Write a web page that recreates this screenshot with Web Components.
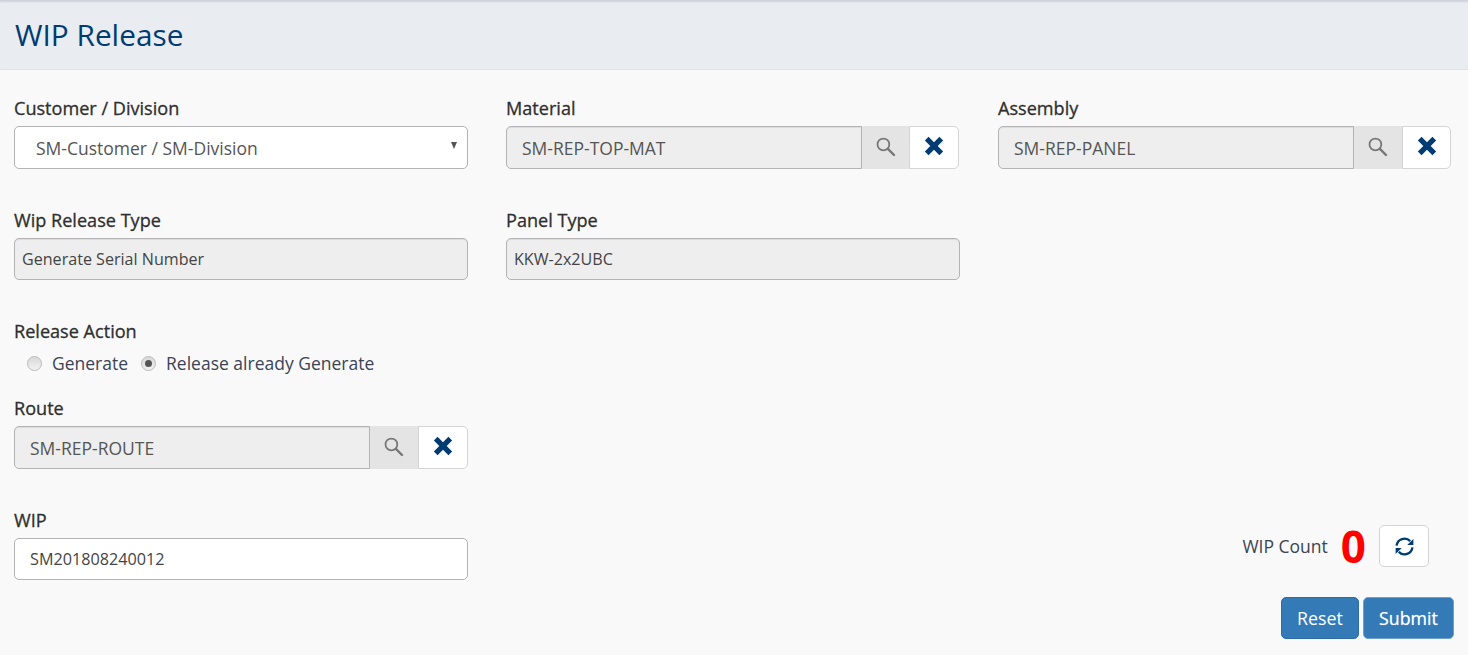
<!DOCTYPE html>
<html lang="en"><head><meta charset="utf-8"><title>WIP Release</title>
<style>
html,body{margin:0;padding:0;height:655px;overflow:hidden;background:#f9f9f9;font-family:"Open Sans",sans-serif;color:#333}
wip-form{display:block}
</style></head><body>
<wip-header>WIP Release</wip-header>
<wip-form>
  <form-row>
    <form-field label="Customer / Division"><select-box>SM-Customer / SM-Division</select-box></form-field>
    <form-field label="Material"><lookup-input style="--s:47px;margin-right:1px">SM-REP-TOP-MAT</lookup-input></form-field>
    <form-field label="Assembly"><lookup-input style="--x:49px">SM-REP-PANEL</lookup-input></form-field>
  </form-row>
  <form-row next>
    <form-field label="Wip Release Type"><text-box readonly>Generate Serial Number</text-box></form-field>
    <form-field label="Panel Type"><text-box readonly>KKW-2x2UBC</text-box></form-field>
  </form-row>
  <form-row next>
    <form-field label="Release Action"><radio-group><radio-option>Generate</radio-option><radio-option checked>Release already Generate</radio-option></radio-group></form-field>
  </form-row>
  <form-row route>
    <form-field label="Route"><lookup-input>SM-REP-ROUTE</lookup-input></form-field>
  </form-row>
  <form-row next>
    <form-field label="WIP"><text-box>SM201808240012</text-box></form-field>
    <span></span>
    <wip-count value="0"></wip-count>
  </form-row>
  <form-actions><action-button>Reset</action-button><action-button outlined>Submit</action-button></form-actions>
</wip-form>
<script>
const def=(name,css,html)=>{customElements.define(name,class extends HTMLElement{
  constructor(){super();const r=this.attachShadow({mode:'open'});r.innerHTML=`<style>${css}</style>${typeof html==='function'?html(this):html}`;}
});};
const SEARCH=`<svg width="21" height="21" viewBox="0 0 20 20" aria-hidden="true"><circle cx="8" cy="8" r="5.600" fill="none" stroke="#777" stroke-width="1.700"/><path d="M12.300 12.300l5.800 5.800" stroke="#777" stroke-width="2.300" stroke-linecap="round"/></svg>`;
const CROSS=`<svg width="20" height="20" viewBox="2 2 14 14" aria-hidden="true"><path d="M2.600 5.200L5.200 2.600 9 6.400l3.800-3.800 2.600 2.600L11.600 9l3.800 3.800-2.600 2.600L9 11.600l-3.800 3.800-2.600-2.600L6.400 9z" fill="#003c71"/></svg>`;
const ARC=`<path d="M1.500 8.200A7.500 7.500 0 0 1 14.400 3.900" fill="none" stroke="#003c71" stroke-width="2.200"/><path d="M17.400 1.800V7.600H11.600z" fill="#003c71"/>`;
const REFRESH=`<svg width="19" height="19" viewBox="0 0 18 18" aria-hidden="true"><g>${ARC}</g><g transform="rotate(180 9 9)">${ARC}</g></svg>`;

def('wip-header',`:host{display:block;box-sizing:border-box;height:70px;background:#e9ecf1;border-bottom:1px solid #dfe2e6;box-shadow:inset 0 3px 2px -1px #cfd2d8;padding:14px 0 0 15px;font-size:29.800px;line-height:42px;color:#003c71}`,`<slot></slot>`);
def('form-row',`:host{display:grid;grid-template-columns:454px 454px 453px;column-gap:38px;padding:0 0 0 14px;margin-top:27px}
:host([next]){margin-top:40px}:host([route]){margin-top:23px}`,`<slot></slot>`);
def('form-field',`:host{display:block;min-width:0}
.l{display:block;font-size:18.100px;font-weight:400;-webkit-text-stroke:.3px #2f2f2f;line-height:22px;margin-bottom:7px;color:#2f2f2f}`,f=>`<span class="l">${f.getAttribute('label')}</span><slot></slot>`);
def('select-box',`:host{display:flex;align-items:center;box-sizing:border-box;height:43px;background:#fff;border:1px solid #b3b3b3;border-radius:5px;padding:0 10px 0 21px;font-size:17.500px;color:#555}
.t{flex:1}.a{width:0;height:0;border-left:3.500px solid transparent;border-right:3.500px solid transparent;border-top:7px solid #555;margin-top:-4px}`,`<span class="t"><slot></slot></span><span class="a"></span>`);
def('text-box',`:host{display:flex;align-items:center;box-sizing:border-box;height:42px;background:#fff;border:1px solid #b3b3b3;border-radius:5px;padding:0 15px;font-size:16.200px;color:#444}
:host([readonly]){background:#eee;box-shadow:inset 0 1px 1px rgba(0,0,0,.075);padding:0 7px;font-size:16.100px}`,`<slot></slot>`);
def('lookup-input',`:host{display:flex;box-sizing:border-box;height:43px}
.v{flex:1;min-width:0;display:flex;align-items:center;box-sizing:border-box;background:#eee;border:1px solid #b3b3b3;border-radius:5px 0 0 5px;padding:0 15px;font-size:17.500px;color:#555;box-shadow:inset 0 1px 1px rgba(0,0,0,.075)}
.b{flex:none;display:flex;align-items:center;justify-content:center;box-sizing:border-box;border:1px solid #ddd;border-left:0}
.b svg{margin-top:-3px}
.s{width:var(--s,48px);background:#e4e4e4;border-color:#e4e4e4}
.x{width:var(--x,50px);background:#fff;border-color:#d5d5d5;border-left:1px solid #d5d5d5;border-radius:0 5px 5px 0}`,`<span class="v"><slot></slot></span><span class="b s">${SEARCH}</span><span class="b x">${CROSS}</span>`);
def('radio-group',`:host{display:flex;gap:13px;padding:3px 0 0 13px;height:22px;align-items:center}`,`<slot></slot>`);
def('radio-option',`:host{display:inline-flex;align-items:center;gap:10px;font-size:17.500px;line-height:22px;color:#3b4456}
.r{box-sizing:border-box;width:15px;height:15px;border-radius:50%;border:1px solid #bbb;background:linear-gradient(#d8d8d8,#f2f2f2);display:flex;align-items:center;justify-content:center}
:host([checked]) .r::after{content:"";width:7px;height:7px;border-radius:50%;background:#555}`,`<span class="r"></span><slot></slot>`);
def('wip-count',`:host{display:flex;align-items:center;justify-content:flex-end;padding-right:22px;height:42px;margin-top:16px;font-size:17.500px;color:#3b4456;white-space:nowrap}
.n{font-size:44px;font-weight:700;color:#f00;line-height:42px;margin:0 13px 0 13px}
.b{display:flex;align-items:center;justify-content:center;box-sizing:border-box;width:50px;height:42px;background:#fff;border:1px solid #d5d5d5;border-radius:5px}`,c=>`<span>WIP Count</span><span class="n">${c.getAttribute('value')}</span><span class="b">${REFRESH}</span>`);
def('form-actions',`:host{display:flex;justify-content:flex-end;gap:4px;padding-right:14px;margin-top:17px}`,`<slot></slot>`);
def('action-button',`:host{display:flex;align-items:center;justify-content:center;box-sizing:border-box;height:42px;width:78px;padding-bottom:1px;background:#337ab7;border:1px solid #2e6da4;border-radius:5px;color:#fff;font-size:17.800px}
:host([outlined]){width:91px;border:1px solid #6fa0cb;text-shadow:0 0 1px rgba(255,255,255,.6)}`,`<slot></slot>`);
</script>
</body></html>
